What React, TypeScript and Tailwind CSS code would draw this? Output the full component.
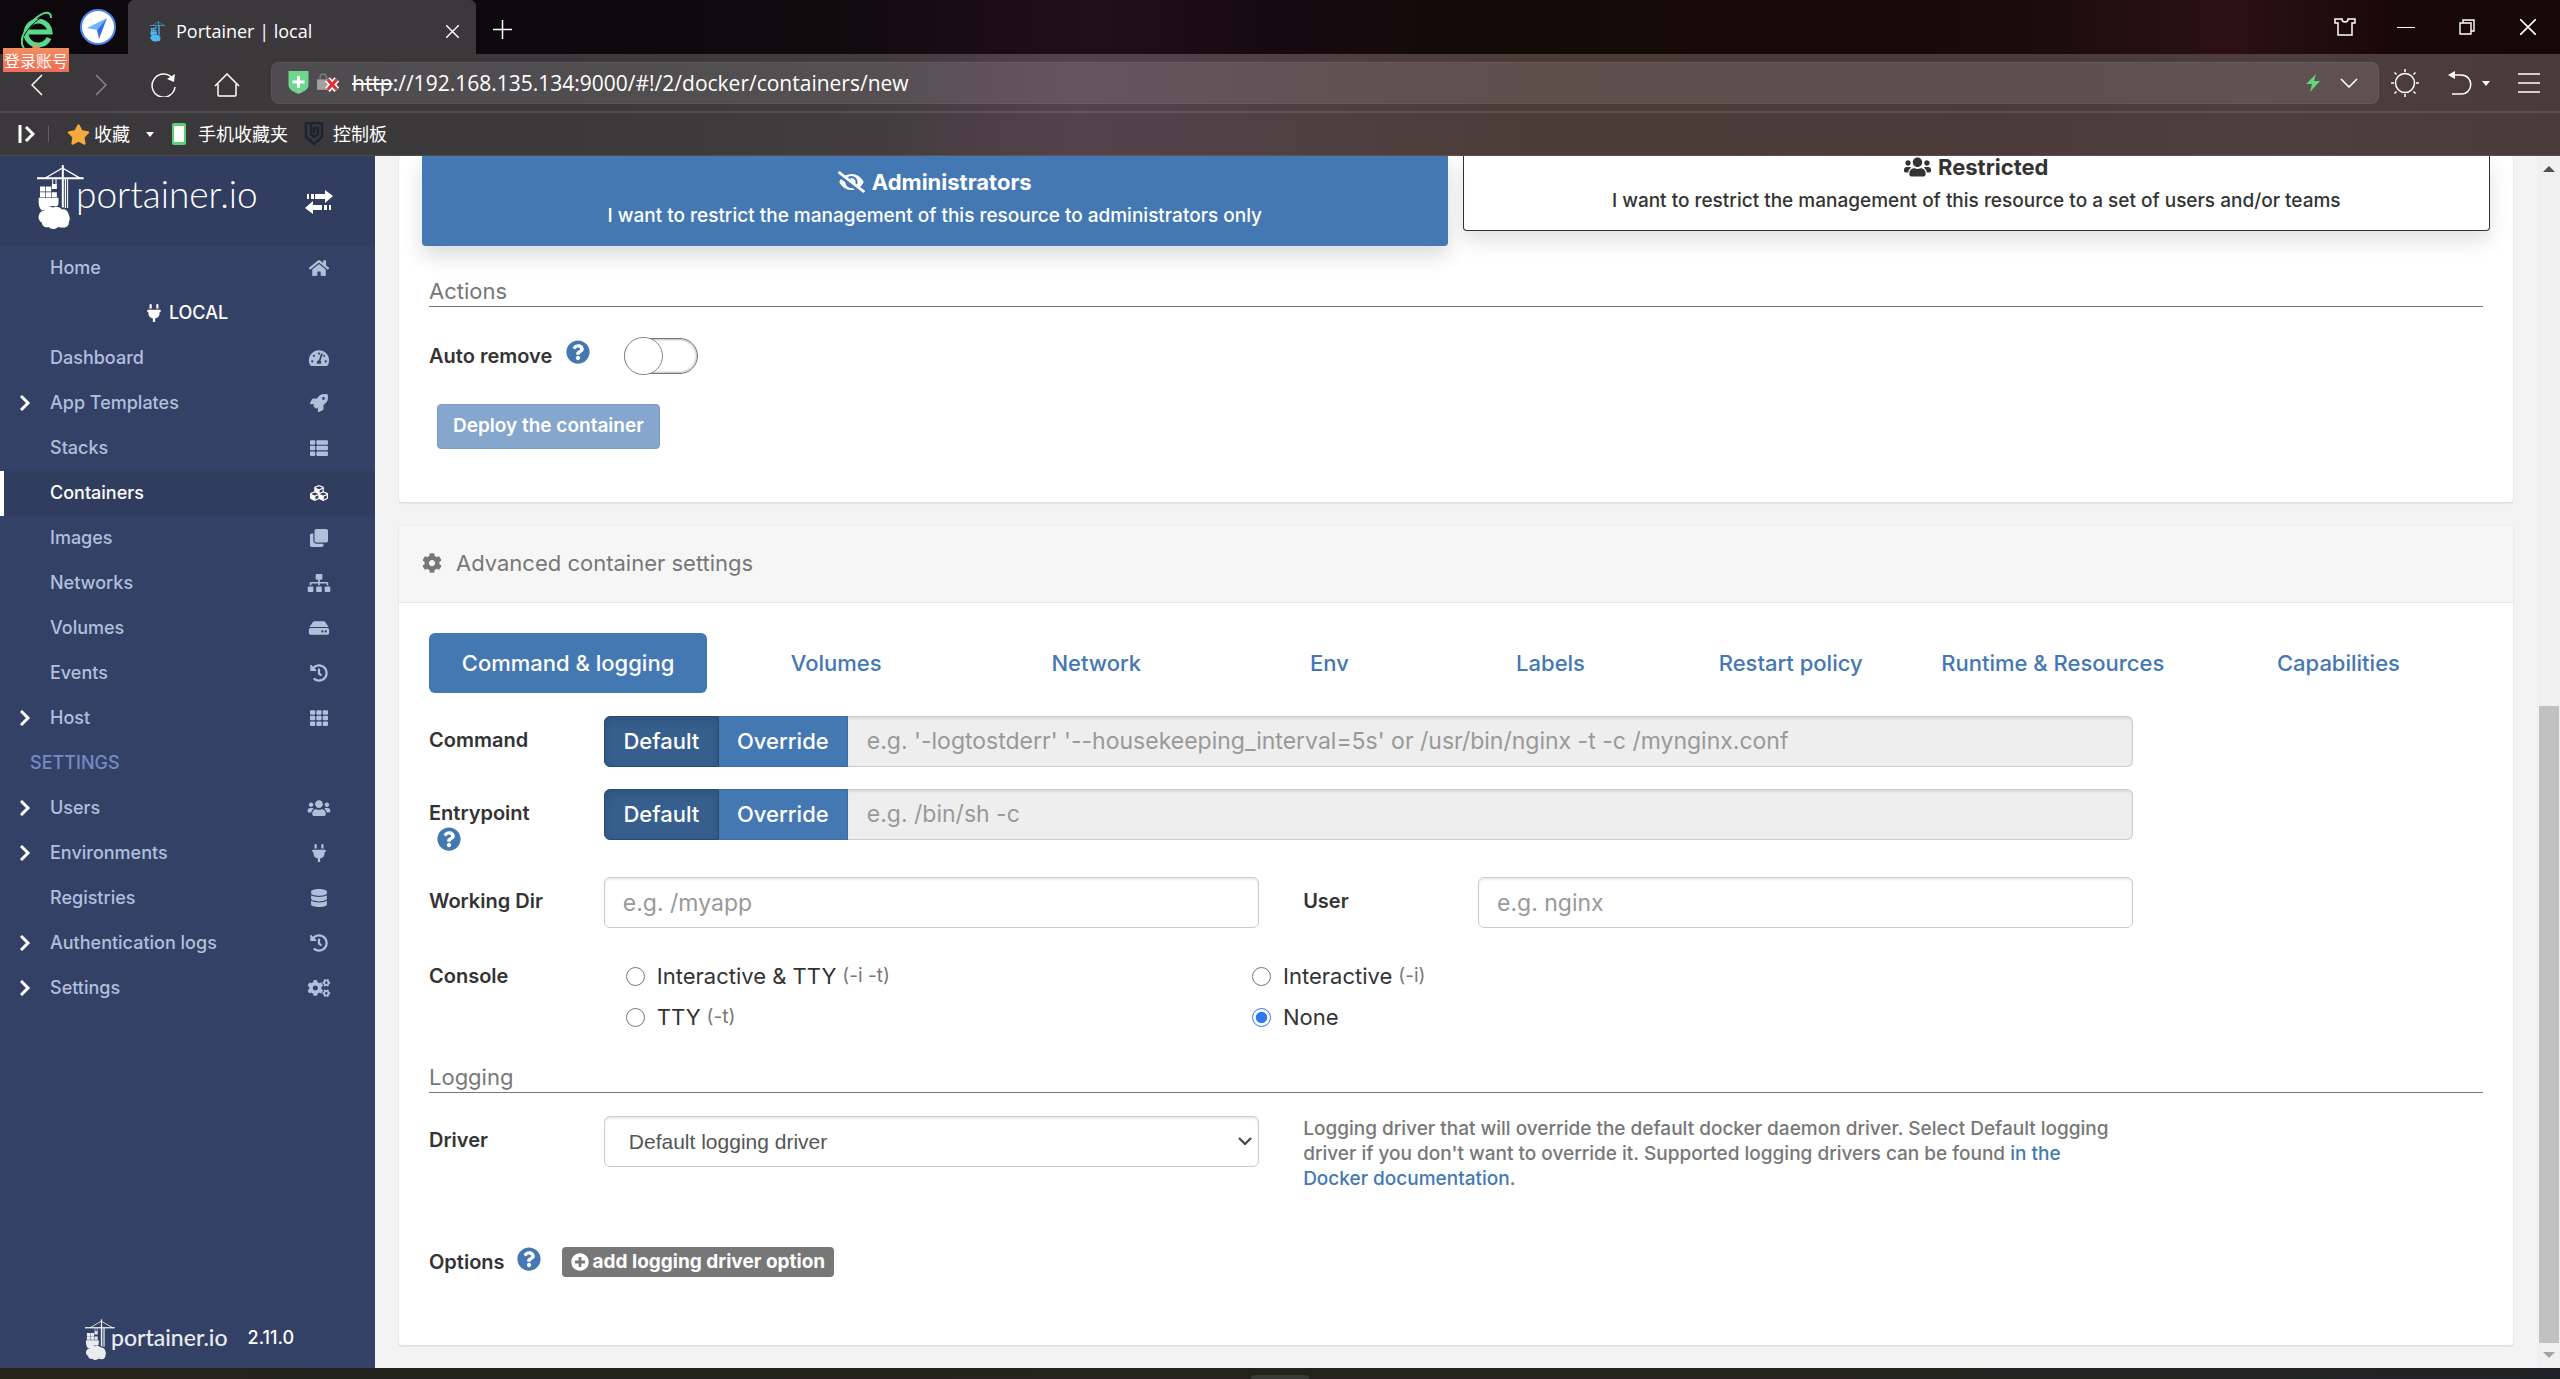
import React, { type ReactNode } from 'react';
import type { IconType } from 'react-icons';
import {
  FaClone,
  FaCog,
  FaCogs,
  FaCubes,
  FaDatabase,
  FaEyeSlash,
  FaHdd,
  FaHistory,
  FaHome,
  FaPlug,
  FaPlusCircle,
  FaQuestionCircle,
  FaRocket,
  FaSitemap,
  FaStar,
  FaTachometerAlt,
  FaTh,
  FaThList,
  FaUsers,
} from 'react-icons/fa';

/* ---------- Logos ---------- */

function CraneMark({ className }: { className: string }) {
  return (
    <svg viewBox="0 0 142 196" className={className} fill="currentColor" aria-hidden="true">
      <path d="M75 0h6v128h-6z" />
      <path d="M84 42h4v88h-4zM91 42h3v88h-3z" />
      <path d="M0 37h141v6H0z" />
      <path d="M24 40 77 9l54 31" fill="none" stroke="currentColor" strokeWidth="4" />
      <path d="M46 42h3v16h-3zM56 42h3v16h-3z" />
      <path d="M45 57h15v15H45zM9 65h16v15H9zM27 65h16v15H27zM9 82h16v15H9zM27 82h16v15H27zM45 82h15v15H45z" />
      <path d="M5 99h60v18c0 5-4 8-10 8-12-3-22 1-26 9l-14 3C8 132 5 122 5 112z" />
      <path d="M22 137c3-10 16-14 26-9 10-4 22-2 27 6 10-2 19 5 20 14 5 8 5 18 1 25 1 11-9 18-19 16-6 0-9-1-12-3-9 9-23 9-30 1-11 3-20-4-20-13-8-4-12-12-10-20 1-9 8-16 17-17z" />
    </svg>
  );
}

function PortainerLogo({ small = false }: { small?: boolean }) {
  return small ? (
    <div className="flex items-start text-white/90">
      <CraneMark className="h-[42px] w-[30px]" />
      <span className="-ml-1 font-['Lato'] text-[23px] leading-[36px]">portainer.io</span>
    </div>
  ) : (
    <div className="flex items-start text-white">
      <CraneMark className="h-[65px] w-[47px]" />
      <span className="-ml-2 font-['Lato'] text-[37px] leading-[58px] font-light">portainer.io</span>
    </div>
  );
}

/* ---------- Browser chrome ---------- */

function BrowserLogo() {
  return (
    <svg viewBox="0 0 32 38" className="h-[38px] w-8" fill="none" aria-hidden="true">
      <path d="M28 27a12 12 0 1 1 1-6H7" stroke="#5bd98a" strokeWidth="5" />
      <path d="M3 37c-4-5-2-13 4-21C14 6 24-1 29 3c1 1 1 2 1 4" stroke="#5bd98a" strokeWidth="2" />
      <path d="M3 25C7 17 14 10 23 5" stroke="#0c080c" strokeWidth="1" />
    </svg>
  );
}

function TitleBar() {
  return (
    <div className="flex h-[54px] bg-[linear-gradient(90deg,#0d080c_0%,#0e080f_22%,#110a0d_32%,#200f1b_43%,#150a10_50%,#140a07_60%,#170b0b_78%,#2c1014_87%,#1a0809_93%,#150808_100%)]">
      <div className="relative flex w-[128px] shrink-0 items-start pl-[21px]">
        <button aria-label="Browser account" className="mt-[11px]">
          <BrowserLogo />
        </button>
        <button aria-label="Assistant" className="mt-[9px] ml-[27px]">
          <svg viewBox="0 0 36 36" className="h-9 w-9" aria-hidden="true">
            <circle cx="18" cy="18" r="17" fill="#fff" stroke="#4c84f0" strokeWidth="2" />
            <path d="M27 9 7 19l10 2z" fill="#6fb1fa" />
            <path d="M27 9 17 21l2 9z" fill="#2f6fe8" />
          </svg>
        </button>
        <div className="absolute top-[48px] left-[3px] z-10 bg-linear-to-b from-[#f28d5f] to-[#ee6b58] px-px font-['Noto_Sans_CJK_SC',sans-serif] text-[16px] leading-6 whitespace-nowrap text-white">
          登录账号
          <span className="absolute -top-1 left-[29px] border-x-4 border-b-4 border-x-transparent border-b-[#f28d5f]" />
        </div>
      </div>
      <div className="flex w-[348px] shrink-0 items-center rounded-t-md bg-[#3b383c] pt-2 pr-[17px] pl-5 text-white">
        <CraneMark className="h-[21px] w-[19px] text-[#4db8f2]" />
        <span className="ml-[9px] flex-1 text-[18px] leading-6">Portainer | local</span>
        <button aria-label="Close tab">
          <svg viewBox="0 0 13 13" className="h-[13px] w-[13px]" stroke="#fff" strokeWidth="1.400" aria-hidden="true">
            <path d="m0 0 13 13M13 0 0 13" />
          </svg>
        </button>
      </div>
      <button aria-label="New tab" className="ml-[17px] pt-1">
        <svg viewBox="0 0 19 19" className="h-[19px] w-[19px]" stroke="#fff" strokeWidth="1.500" aria-hidden="true">
          <path d="M9.500 0v19M0 9.500h19" />
        </svg>
      </button>
      <div className="ml-auto flex items-center">
        <button aria-label="Themes" className="flex w-[61px] justify-center">
          <svg viewBox="0 0 22 18" className="h-[18px] w-[22px]" fill="none" stroke="#fff" strokeWidth="1.500" aria-hidden="true">
            <path d="M1 1h7c0 4 6 4 6 0h7v4h-3v12H4V5H1z" />
          </svg>
        </button>
        <button aria-label="Minimise" className="flex w-[61px] justify-center">
          <span className="h-px w-[18px] bg-white" />
        </button>
        <button aria-label="Restore" className="flex w-[61px] justify-center">
          <svg viewBox="0 0 16 16" className="h-4 w-4" fill="none" stroke="#fff" strokeWidth="1.400" aria-hidden="true">
            <path d="M1 4h11v11H1zM4 4V1h11v11h-3" />
          </svg>
        </button>
        <button aria-label="Close window" className="mr-[2px] flex w-[61px] justify-center">
          <svg viewBox="0 0 16 16" className="h-4 w-4" stroke="#fff" strokeWidth="1.600" aria-hidden="true">
            <path d="m0 0 16 16M16 0 0 16" />
          </svg>
        </button>
      </div>
    </div>
  );
}

function AddressBar() {
  return (
    <div className="flex h-[57px] items-center">
      <div className="flex w-[271px] shrink-0 items-center pt-1">
        <button aria-label="Back" className="ml-[31px] w-16">
          <svg viewBox="0 0 12 22" className="h-[22px] w-3" fill="none" stroke="#fff" strokeWidth="1.500" aria-hidden="true">
            <path d="M11 1 1 11l10 10" />
          </svg>
        </button>
        <button aria-label="Forward" className="w-14">
          <svg viewBox="0 0 12 22" className="h-[22px] w-3" fill="none" stroke="#8a8789" strokeWidth="1.500" aria-hidden="true">
            <path d="m1 1 10 10L1 21" />
          </svg>
        </button>
        <button aria-label="Reload" className="w-[63px]">
          <svg viewBox="0 0 25 25" className="h-[25px] w-[25px]" fill="none" stroke="#fff" strokeWidth="1.500" aria-hidden="true">
            <path d="M22 7A11.500 11.500 0 1 0 24 15" />
            <path d="m24 2-1 8-7-3z" fill="#fff" stroke="none" />
          </svg>
        </button>
        <button aria-label="Home page">
          <svg viewBox="0 0 26 24" className="h-6 w-[26px]" fill="none" stroke="#fff" strokeWidth="1.500" aria-hidden="true">
            <path d="M1 13 13 1l12 12M4 11v11q0 1 1 1h16q1 0 1-1V11" />
          </svg>
        </button>
      </div>
      <div className="flex h-[42px] flex-1 items-center rounded-lg border border-white/5 bg-white/10 pr-5 pl-4">
        <svg viewBox="0 0 20 23" className="h-[23px] w-[21px] shrink-0" aria-hidden="true">
          <path d="M0 0h20v14c0 5-6 7-10 9-4-2-10-4-10-9z" fill="#6ed78d" />
          <path d="M10 5v12M4 11h12" stroke="#fff" strokeWidth="3" />
        </svg>
        <svg viewBox="0 0 22 18" className="ml-2 h-[19px] w-[23px] shrink-0" fill="none" aria-hidden="true">
          <path d="M3 6V4c0-4 6-4 6 0v2" stroke="#777" strokeWidth="1.500" />
          <path d="M0 6h12v10H0z" fill="#a3a0a2" />
          <path d="m10 6 9 10m0-10-9 10" stroke="#fff" strokeWidth="6" />
          <path d="m10 6 9 10m0-10-9 10" stroke="#d7373b" strokeWidth="3" />
        </svg>
        <span className="ml-3 flex-1 text-[21px] leading-7 text-white">
          <s className="decoration-2">http</s>://192.168.135.134:9000/#!/2/docker/containers/new
        </span>
        <svg viewBox="0 0 14 18" className="h-[18px] w-[14px]" aria-hidden="true">
          <path d="M10 0 0 10h6l-2 8 10-11H8z" fill="#63d67e" />
        </svg>
        <button aria-label="Show address history" className="ml-5">
          <svg viewBox="0 0 18 10" className="h-[10px] w-[18px]" fill="none" stroke="#fff" strokeWidth="1.600" aria-hidden="true">
            <path d="m1 1 8 8 8-8" />
          </svg>
        </button>
      </div>
      <div className="flex shrink-0 items-center pt-px pr-5">
        <button aria-label="Brightness" className="ml-3">
          <svg viewBox="0 0 28 28" className="h-7 w-7" fill="none" stroke="#fff" strokeWidth="1.500" aria-hidden="true">
            <circle cx="14" cy="14" r="9.500" />
            <path d="M14 0v3M14 25v3M0 14h3M25 14h3M3.500 3.500l2 2M22.500 22.500l2 2M24.500 3.500l-2 2M5.500 22.500l-2 2" />
          </svg>
        </button>
        <button aria-label="Undo close" className="ml-[29px] flex items-center gap-[10px]">
          <svg viewBox="0 0 24 24" className="h-6 w-6" fill="none" stroke="#fff" strokeWidth="1.500" aria-hidden="true">
            <path d="M4 4h9c13 0 13 19 0 19H4" />
            <path d="M0 4 7 0v8z" fill="#fff" stroke="none" />
          </svg>
          <span className="border-x-4 border-t-[5px] border-x-transparent border-t-white" />
        </button>
        <button aria-label="Menu" className="ml-7">
          <svg viewBox="0 0 22 20" className="h-5 w-[22px]" stroke="#fff" strokeWidth="1.500" aria-hidden="true">
            <path d="M0 1h22M0 10h22M0 19h22" />
          </svg>
        </button>
      </div>
    </div>
  );
}

function BookmarkBar() {
  return (
    <div className="flex h-[45px] items-center border-t-2 border-b border-t-white/10 border-b-white/10 pl-[18px] text-[18px] leading-6 text-white">
      <button aria-label="Show sidebar">
        <svg viewBox="0 0 17 18" className="h-[18px] w-[17px]" fill="none" stroke="#fff" strokeWidth="3" aria-hidden="true">
          <path d="M2 0v18M8 2l7 7-7 7" />
        </svg>
      </button>
      <span className="ml-[13px] h-4 w-px bg-white/20" />
      <button className="ml-[18px] flex items-center">
        <FaStar className="h-[21px] w-[23px] text-[#f3a93c]" />
        <span className="ml-1">收藏</span>
        <span className="ml-4 border-x-4 border-t-[5px] border-x-transparent border-t-white" />
      </button>
      <a href="#mobile" className="ml-[18px] flex items-center">
        <span className="h-[22px] w-[14px] rounded-xs border-2 border-y-3 border-[#5bd076] bg-white" />
        <span className="ml-3">手机收藏夹</span>
      </a>
      <a href="#panel" className="ml-4 flex items-center">
        <svg viewBox="0 0 18 24" className="h-6 w-5" fill="none" stroke="#1e2230" strokeWidth="2.500" aria-hidden="true">
          <path d="M1 1h16v14l-8 7-8-7zM6 1v11l3 3 4-3V6H9v5" />
        </svg>
        <span className="ml-[9px]">控制板</span>
      </a>
    </div>
  );
}

/* ---------- Sidebar ---------- */

type NavEntry = { label: string; icon: IconType; expandable?: boolean; active?: boolean };

const environmentNav: NavEntry[] = [
  { label: 'Dashboard', icon: FaTachometerAlt },
  { label: 'App Templates', icon: FaRocket, expandable: true },
  { label: 'Stacks', icon: FaThList },
  { label: 'Containers', icon: FaCubes, active: true },
  { label: 'Images', icon: FaClone },
  { label: 'Networks', icon: FaSitemap },
  { label: 'Volumes', icon: FaHdd },
  { label: 'Events', icon: FaHistory },
  { label: 'Host', icon: FaTh, expandable: true },
];

const settingsNav: NavEntry[] = [
  { label: 'Users', icon: FaUsers, expandable: true },
  { label: 'Environments', icon: FaPlug, expandable: true },
  { label: 'Registries', icon: FaDatabase },
  { label: 'Authentication logs', icon: FaHistory, expandable: true },
  { label: 'Settings', icon: FaCogs, expandable: true },
];

function NavItem({ label, icon: Icon, expandable, active }: NavEntry) {
  return (
    <li>
      <a
        href={'#' + label}
        className={
          active
            ? 'flex h-[45px] items-center border-l-4 border-white bg-[#303d5e] pr-11 pb-[2px] pl-4 text-white'
            : 'flex h-[45px] items-center pr-11 pb-[2px] pl-5 text-[#b2bfdc]'
        }
      >
        <span className="flex w-[30px] shrink-0 text-white">
          {expandable && (
            <svg viewBox="0 0 11 16" className="h-4 w-[11px]" fill="none" stroke="currentColor" strokeWidth="3" aria-hidden="true">
              <path d="m1 1 7 7-7 7" />
            </svg>
          )}
        </span>
        <span className="flex-1">{label}</span>
        <Icon className="h-[18px] w-6" />
      </a>
    </li>
  );
}

function Sidebar() {
  return (
    <nav className="flex w-[375px] shrink-0 flex-col bg-[#344167] font-['Inter',sans-serif] text-[18px] leading-6 font-medium">
      <div className="flex h-[90px] items-start justify-between bg-[#313e60] pt-[9px] pr-[42px] pl-[37px]">
        <PortainerLogo />
        <button aria-label="Toggle sidebar" className="mt-[25px] text-white">
          <svg viewBox="0 0 28 24" className="h-6 w-7" fill="currentColor" aria-hidden="true">
            <path d="M2 4h2v5H2zM6 4h3v5H6zM10 4h10V0l8 6-8 7V9H10z" />
            <path d="M26 15h-2v5h2zM22 15h-3v5h3zM17 15H8v-4l-8 7 8 6v-4h9z" />
          </svg>
        </button>
      </div>
      <ul>
        <NavItem label="Home" icon={FaHome} />
        <li className="flex h-[45px] items-center justify-center gap-2 pb-[2px] text-white">
          <FaPlug className="h-[18px] w-[14px]" />
          LOCAL
        </li>
        {environmentNav.map((entry) => (
          <NavItem key={entry.label} {...entry} />
        ))}
        <li className="flex h-[45px] items-center pb-[2px] pl-[30px] text-[#738bc4]">SETTINGS</li>
        {settingsNav.map((entry) => (
          <NavItem key={entry.label} {...entry} />
        ))}
      </ul>
      <div className="mt-auto flex items-center gap-5 pb-[7px] pl-[85px]">
        <PortainerLogo small />
        <span className="pb-1 text-white">2.11.0</span>
      </div>
    </nav>
  );
}

/* ---------- Form parts ---------- */

function HelpIcon({ className = '' }: { className?: string }) {
  return <FaQuestionCircle className={'h-6 w-6 shrink-0 text-[#4478b2] ' + className} aria-label="Help" />;
}

function SectionTitle({ children }: { children: ReactNode }) {
  return (
    <h3 className="mx-[22px] border-b border-[#777] text-[22px] leading-[30px] text-[#777]">{children}</h3>
  );
}

const labelClass = 'px-[22px] pt-3 text-[20px] leading-6 font-semibold text-[#333]';
const inputClass =
  'h-[51px] w-full rounded-md border border-[#ccc] bg-white px-[18px] text-[23px] text-[#555] shadow-[inset_0_2px_2px_rgba(0,0,0,0.075)] placeholder:text-[#999]';

function OverrideField({ id, label, placeholder, help }: { id: string; label: string; placeholder: string; help?: boolean }) {
  return (
    <div className="grid h-[51px] grid-cols-12 items-start">
      <div>
        <label htmlFor={id} className={'block whitespace-nowrap ' + labelClass}>
          {label}
        </label>
        {help && <HelpIcon className="mt-[2px] ml-[30px]" />}
      </div>
      <div className="col-span-9 flex h-[51px] px-[22px]">
        <button className="w-[115px] shrink-0 rounded-l-md border border-[#2a4b70] bg-[#365f8e] text-[22px] font-medium text-white shadow-[inset_0_4px_8px_rgba(0,0,0,0.125)]">
          Default
        </button>
        <button className="w-[129px] shrink-0 border border-l-0 border-[#3d6ca1] bg-[#4478b2] text-[22px] font-medium text-white">
          Override
        </button>
        <input
          id={id}
          disabled
          placeholder={placeholder}
          className="min-w-0 flex-1 rounded-r-md border border-l-0 border-[#ccc] bg-[#eee] px-[19px] text-[23px] shadow-[inset_0_2px_2px_rgba(0,0,0,0.075)] placeholder:text-[#999]"
        />
      </div>
    </div>
  );
}

function ConsoleOption({ label, flags, checked }: { label: string; flags?: string; checked?: boolean }) {
  return (
    <label className="flex h-[41px] items-center text-[22px] text-[#333]">
      <input type="radio" name="console" defaultChecked={checked} className="mr-3 h-[19px] w-[19px] accent-[#2f76f2]" />
      {label}
      {flags && <small className="ml-[6px] text-[19px] text-[#777]">{flags}</small>}
    </label>
  );
}

/* ---------- Panels ---------- */

const panelClass = 'rounded-xs bg-white shadow-[0_2px_2px_rgba(0,0,0,0.06),0_0_1px_rgba(0,0,0,0.25)]';

function ActionsPanel() {
  return (
    <section className={'px-2 pb-[53px] ' + panelClass}>
      <div className="flex items-start gap-[15px] px-[15px] text-center text-[19px] leading-[34px]">
        <button className="relative flex-1 rounded-b-sm bg-[#4478b2] pt-[9px] pb-[13px] font-medium text-white shadow-[0_10px_20px_rgba(0,0,0,0.14)]">
          <span className="absolute top-0 left-1/2 h-[3px] w-6 -translate-x-1/2 rounded-b-full border-b border-[#3f70a8]" />
          <span className="flex items-center justify-center gap-[7px] text-[22px] font-bold">
            <FaEyeSlash className="h-[22px] w-[27px]" />
            Administrators
          </span>
          <span className="block">I want to restrict the management of this resource to administrators only</span>
        </button>
        <button className="flex-1 rounded-b-sm border border-t-0 border-[#333] bg-white pb-3 font-medium text-[#333] shadow-[0_10px_20px_rgba(0,0,0,0.12)]">
          <span className="flex items-center justify-center gap-[7px] pb-[6px] text-[22px] leading-[22px] font-bold">
            <FaUsers className="h-[22px] w-[27px]" />
            Restricted
          </span>
          <span className="block">I want to restrict the management of this resource to a set of users and/or teams</span>
        </button>
      </div>
      <div className="mt-[30px]">
        <SectionTitle>Actions</SectionTitle>
      </div>
      <div className="mt-[30px] flex h-[38px] items-center px-[22px]">
        <label htmlFor="auto-remove" className="text-[20px] leading-6 font-semibold text-[#333]">
          Auto remove
        </label>
        <HelpIcon className="mb-2 ml-[14px]" />
        <label className="relative ml-[34px] flex h-[38px] w-[74px] items-center">
          <input
            id="auto-remove"
            type="checkbox"
            className="h-[36px] w-full appearance-none rounded-full border border-[#777] bg-white shadow-[inset_0_0_2px_1px_#bbb]"
          />
          <span className="absolute top-0 left-0 h-[38px] w-[39px] rounded-full border border-[#888] bg-white" />
        </label>
      </div>
      <button
        disabled
        className="mt-[29px] ml-[30px] h-[45px] rounded-[4px] border border-[#7d9cc2] bg-[#86a7cd] px-[15px] text-[19px] font-semibold text-white"
      >
        Deploy the container
      </button>
    </section>
  );
}

const tabs = ['Command & logging', 'Volumes', 'Network', 'Env', 'Labels', 'Restart policy', 'Runtime & Resources', 'Capabilities'];

function AdvancedPanel() {
  return (
    <section className={panelClass}>
      <h2 className="flex h-[77px] items-center gap-[14px] rounded-t-xs border-b border-[#e9e9e9] bg-[#f6f6f6] px-[23px] pb-[2px] text-[22px] text-[#777]">
        <FaCog className="h-5 w-5" />
        Advanced container settings
      </h2>
      <div className="px-2 pt-[30px] pb-[68px]">
        <div
          role="tablist"
          className="mx-[22px] grid h-[60px] grid-cols-[278fr_258fr_262fr_204fr_238fr_242fr_282fr_289fr] text-[22px] font-medium text-[#4478b2]"
        >
          {tabs.map((tab, index) => (
            <button
              key={tab}
              role="tab"
              aria-selected={index === 0}
              className="rounded-md whitespace-nowrap aria-selected:bg-[#4478b2] aria-selected:text-white"
            >
              {tab}
            </button>
          ))}
        </div>

        <div className="mt-[23px] flex flex-col gap-[22px]">
          <OverrideField
            id="command"
            label="Command"
            placeholder="e.g. '-logtostderr' '--housekeeping_interval=5s' or /usr/bin/nginx -t -c /mynginx.conf"
          />
          <OverrideField id="entrypoint" label="Entrypoint" placeholder="e.g. /bin/sh -c" help />
        </div>

        <div className="mt-[37px] grid grid-cols-12">
          <label htmlFor="workdir" className={'whitespace-nowrap ' + labelClass}>
            Working Dir
          </label>
          <div className="col-span-4 px-[22px]">
            <input id="workdir" placeholder="e.g. /myapp" className={inputClass} />
          </div>
          <label htmlFor="user" className={labelClass}>
            User
          </label>
          <div className="col-span-4 px-[22px]">
            <input id="user" placeholder="e.g. nginx" className={inputClass} />
          </div>
        </div>

        <div role="radiogroup" aria-label="Console" className="mt-7 grid grid-cols-12">
          <span className="px-[22px] text-[20px] leading-10 font-semibold text-[#333]">Console</span>
          <div className="col-span-9 grid grid-cols-[626fr_881fr] pr-[22px] pl-[44px]">
            <ConsoleOption label="Interactive & TTY" flags="(-i -t)" />
            <ConsoleOption label="Interactive" flags="(-i)" />
            <ConsoleOption label="TTY" flags="(-t)" />
            <ConsoleOption label="None" checked />
          </div>
        </div>

        <div className="mt-6">
          <SectionTitle>Logging</SectionTitle>
        </div>

        <div className="mt-[23px] grid grid-cols-12">
          <label htmlFor="driver" className={labelClass}>
            Driver
          </label>
          <div className="relative col-span-4 px-[22px]">
            <select
              id="driver"
              className="h-[51px] w-full appearance-none rounded-md border border-[#ccc] bg-white px-6 font-['Liberation_Sans',sans-serif] text-[21px] text-[#555] shadow-[inset_0_2px_2px_rgba(0,0,0,0.075)]"
            >
              <option>Default logging driver</option>
            </select>
            <svg
              viewBox="0 0 14 9"
              className="pointer-events-none absolute top-[21px] right-[29px] h-[9px] w-[14px]"
              fill="none"
              stroke="#444"
              strokeWidth="2.200"
              aria-hidden="true"
            >
              <path d="m1 1 6 6 6-6" />
            </svg>
          </div>
          <p className="col-span-5 max-w-[859px] px-[22px] text-[19px] leading-[25px] font-medium text-[#777]">
            Logging driver that will override the default docker daemon driver. Select Default logging driver if you
            don&apos;t want to override it. Supported logging drivers can be found{' '}
            <a href="#docs" className="text-[#4478b2]">
              in the Docker documentation
            </a>
            .
          </p>
        </div>

        <div className="mt-14 flex h-[30px] items-center px-[22px]">
          <span className="text-[20px] leading-6 font-semibold text-[#333]">Options</span>
          <HelpIcon className="mb-[6px] ml-3" />
          <button className="ml-[21px] flex h-[30px] items-center gap-1 rounded-[4px] bg-[#777] px-[9px] text-[19px] font-bold text-white">
            <FaPlusCircle className="h-[18px] w-[18px]" />
            add logging driver option
          </button>
        </div>
      </div>
    </section>
  );
}

/* ---------- Page ---------- */

function PageScrollbar() {
  return (
    <div className="flex w-[23px] shrink-0 flex-col items-center bg-[#f0f0f0]" aria-hidden="true">
      <span className="mt-[10px] mb-[10px] border-x-6 border-b-6 border-x-transparent border-b-[#505050]" />
      <span className="flex-[524]" />
      <span className="w-5 flex-[637] bg-[#c1c1c1]" />
      <span className="mt-[9px] mb-[10px] border-x-6 border-t-6 border-x-transparent border-t-[#a3a3a3]" />
    </div>
  );
}

export default function App() {
  return (
    <div className="flex h-screen flex-col overflow-hidden font-['Open_Sans','Noto_Sans_CJK_SC',sans-serif]">
      <header className="shrink-0">
        <TitleBar />
        <div className="bg-[linear-gradient(90deg,#3b383b_0%,#3c393b_22%,#423c3e_34%,#54424c_42%,#4f4044_50%,#4c3c37_60%,#4a3b3a_78%,#4e3f3f_88%,#493b3a_100%)]">
          <AddressBar />
          <BookmarkBar />
        </div>
      </header>
      <div className="flex min-h-0 flex-1">
        <Sidebar />
        <main className="flex min-w-0 flex-1 flex-col gap-6 overflow-hidden bg-[#f3f3f3] pr-6 pl-6 font-['Inter',sans-serif]">
          <ActionsPanel />
          <AdvancedPanel />
        </main>
        <PageScrollbar />
      </div>
      <footer className="flex h-[11px] shrink-0 items-end justify-center bg-[linear-gradient(90deg,#28231a_0%,#22231c_12%,#24231c_60%,#212225_100%)]">
        <span className="h-1 w-[58px] rounded-t-md bg-[#3a3a34]" />
      </footer>
    </div>
  );
}
